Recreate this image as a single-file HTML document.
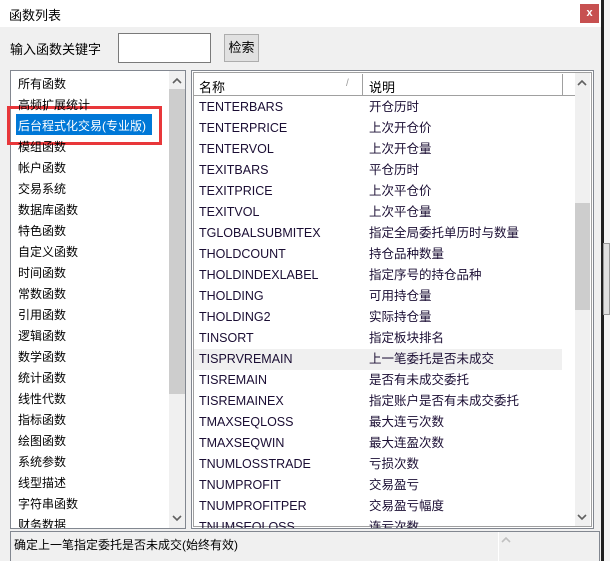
<!DOCTYPE html>
<html><head><meta charset="utf-8"><style>
*{margin:0;padding:0;box-sizing:border-box}
body{width:610px;height:561px;overflow:hidden;background:#f0f0f0;font-family:"Liberation Sans","Noto Sans CJK SC",sans-serif;font-size:12px;color:#000;position:relative}
.a{position:absolute}
.sb{background:#f0f0f0}
.chev{position:absolute;width:16px;height:10px}
</style></head><body>
<div class="a" style="left:0;top:0;width:601px;height:27px;background:#fff"></div>
<div class="a" style="left:9px;top:5px;font-size:13px">函数列表</div>
<div class="a" style="left:580px;top:4px;width:19px;height:19px;background:#c75050;color:#fff;font-size:11px;text-align:center;line-height:18px;font-weight:bold">x</div>
<div class="a" style="left:601px;top:0;width:3px;height:561px;background:#202020"></div>
<div class="a" style="left:604px;top:0;width:6px;height:561px;background:#f4f4f4"></div>
<div class="a" style="left:603px;top:243px;width:7px;height:72px;background:#e0e0e0;border:1px solid #999"></div>

<div class="a" style="left:10px;top:39px;font-size:13px">输入函数关键字</div>
<div class="a" style="left:118px;top:33px;width:93px;height:30px;background:#fff;border:1px solid #7a7a7a"></div>
<div class="a" style="left:224px;top:34px;width:35px;height:28px;background:#e1e1e1;border:1px solid #adadad;font-size:13px;text-align:center;line-height:26px">检索</div>

<!-- left list -->
<div class="a" style="left:10px;top:70px;width:176px;height:459px;background:#fff;border:1px solid #828790"></div>
<div class="a sb" style="left:169px;top:71px;width:16px;height:457px"></div>
<div class="a" style="left:169px;top:89px;width:16px;height:305px;background:#cdcdcd"></div>
<svg class="chev" style="left:169px;top:76px" viewBox="0 0 16 10"><path d="M4 7L8 3L12 7" fill="none" stroke="#606060" stroke-width="1.6"/></svg>
<svg class="chev" style="left:169px;top:513px" viewBox="0 0 16 10"><path d="M4 3L8 7L12 3" fill="none" stroke="#606060" stroke-width="1.6"/></svg>
<div class="a" style="left:16px;top:114px;width:136px;height:21px;background:#0078d7"></div>
<div class="a" style="left:7px;top:106px;width:155px;height:39px;border:3px solid #e8373a"></div>
<div class="a" style="left:18px;top:74px;line-height:21px;font-size:12px;width:150px;height:454px;overflow:hidden">
<div>所有函数</div><div>高频扩展统计</div><div style="color:#fff">后台程式化交易(专业版)</div><div>模组函数</div><div>帐户函数</div><div>交易系统</div><div>数据库函数</div><div>特色函数</div><div>自定义函数</div><div>时间函数</div><div>常数函数</div><div>引用函数</div><div>逻辑函数</div><div>数学函数</div><div>统计函数</div><div>线性代数</div><div>指标函数</div><div>绘图函数</div><div>系统参数</div><div>线型描述</div><div>字符串函数</div><div>财务数据</div>
</div>

<!-- right list -->
<div class="a" style="left:191px;top:70px;width:403px;height:459px;background:#fff;border:1px solid #828790;box-shadow:inset 0 0 0 1px #fff,inset 0 0 0 2px #a0a0a0"></div>
<div class="a sb" style="left:575px;top:73px;width:15px;height:453px"></div>
<div class="a" style="left:575px;top:203px;width:15px;height:107px;background:#cdcdcd"></div>
<svg class="chev" style="left:574px;top:78px" viewBox="0 0 16 10"><path d="M4 7L8 3L12 7" fill="none" stroke="#606060" stroke-width="1.6"/></svg>
<svg class="chev" style="left:574px;top:512px" viewBox="0 0 16 10"><path d="M4 3L8 7L12 3" fill="none" stroke="#606060" stroke-width="1.6"/></svg>
<div class="a" style="left:194px;top:95px;width:381px;height:1px;background:#a0a0a0"></div>
<div class="a" style="left:362px;top:74px;width:1px;height:21px;background:#a0a0a0"></div>
<div class="a" style="left:562px;top:74px;width:1px;height:21px;background:#a0a0a0"></div>
<div class="a" style="left:199px;top:77px;font-size:13px">名称</div>
<div class="a" style="left:346px;top:78px;color:#999;font-size:10px">/</div>
<div class="a" style="left:369px;top:77px;font-size:13px">说明</div>
<div class="a" style="left:194px;top:349px;width:368px;height:21px;background:#f0f0f0"></div>
<div class="a" style="left:199px;top:97px;width:376px;height:431px;overflow:hidden;line-height:21px;color:#1a0d33">
<table style="border-collapse:collapse;font-size:12.5px"><tbody>
<tr><td style="width:170px">TENTERBARS</td><td>开仓历时</td></tr>
<tr><td>TENTERPRICE</td><td>上次开仓价</td></tr>
<tr><td>TENTERVOL</td><td>上次开仓量</td></tr>
<tr><td>TEXITBARS</td><td>平仓历时</td></tr>
<tr><td>TEXITPRICE</td><td>上次平仓价</td></tr>
<tr><td>TEXITVOL</td><td>上次平仓量</td></tr>
<tr><td>TGLOBALSUBMITEX</td><td>指定全局委托单历时与数量</td></tr>
<tr><td>THOLDCOUNT</td><td>持仓品种数量</td></tr>
<tr><td>THOLDINDEXLABEL</td><td>指定序号的持仓品种</td></tr>
<tr><td>THOLDING</td><td>可用持仓量</td></tr>
<tr><td>THOLDING2</td><td>实际持仓量</td></tr>
<tr><td>TINSORT</td><td>指定板块排名</td></tr>
<tr><td>TISPRVREMAIN</td><td>上一笔委托是否未成交</td></tr>
<tr><td>TISREMAIN</td><td>是否有未成交委托</td></tr>
<tr><td>TISREMAINEX</td><td>指定账户是否有未成交委托</td></tr>
<tr><td>TMAXSEQLOSS</td><td>最大连亏次数</td></tr>
<tr><td>TMAXSEQWIN</td><td>最大连盈次数</td></tr>
<tr><td>TNUMLOSSTRADE</td><td>亏损次数</td></tr>
<tr><td>TNUMPROFIT</td><td>交易盈亏</td></tr>
<tr><td>TNUMPROFITPER</td><td>交易盈亏幅度</td></tr>
<tr><td>TNUMSEQLOSS</td><td>连亏次数</td></tr>
</tbody></table></div>

<!-- status -->
<div class="a" style="left:10px;top:531px;width:590px;height:30px;background:#f0f0f0;border:1px solid #828790;border-bottom:none"></div>
<div class="a" style="left:498px;top:532px;width:1px;height:29px;background:#fff"></div>
<svg class="chev" style="left:498px;top:535px" viewBox="0 0 16 10"><path d="M4 7L8 3L12 7" fill="none" stroke="#c0c0c0" stroke-width="1.6"/></svg>
<div class="a" style="left:14px;top:536px">确定上一笔指定委托是否未成交(始终有效)</div>
</body></html>
